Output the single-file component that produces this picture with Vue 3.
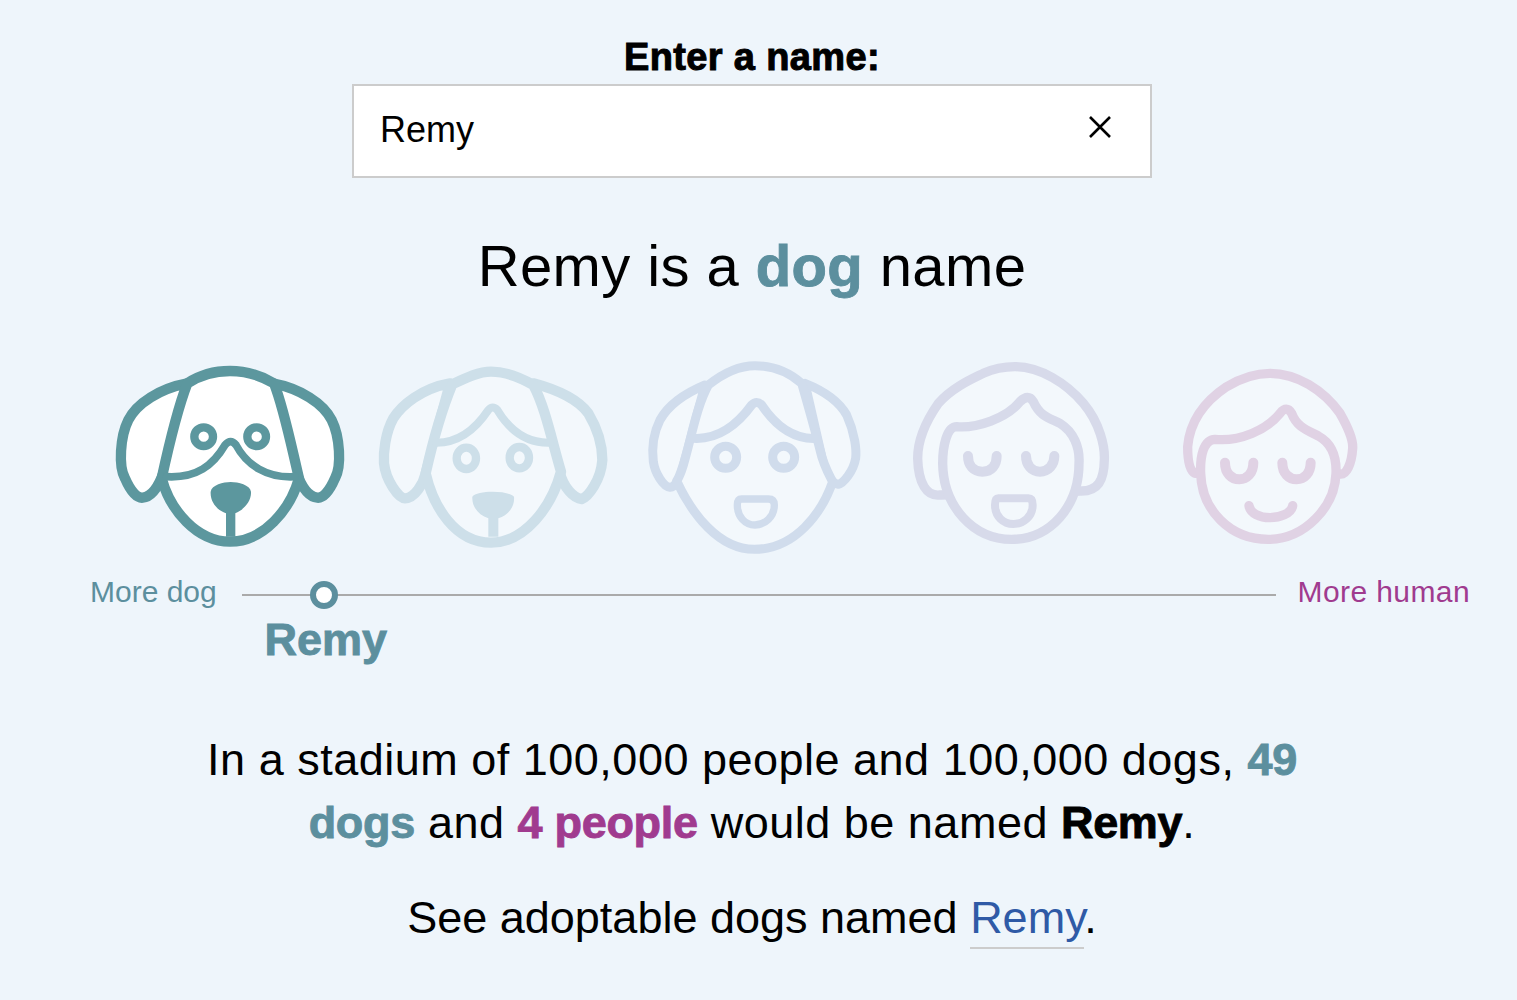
<template>
  <div class="page">
    <label class="label" for="name">Enter a name:</label>
    <div class="search">
      <input id="name" v-model="name" class="search-input" />
      <button class="clear" @click="name = ''">
        <svg width="24" height="24" viewBox="0 0 24 24">
          <path d="M2 2 L22 22 M22 2 L2 22" stroke="#000" stroke-width="2.6" fill="none" />
        </svg>
      </button>
    </div>

    <h1 class="verdict">Remy is a <b class="dog-text heavy">dog</b> name</h1>

    <div class="faces">
      <svg class="face" viewBox="0 0 795 630">
        <g fill="#fff" stroke="#5c979e" stroke-width="31" stroke-linejoin="round" stroke-linecap="round">
          <path d="M262 100 C180 115 110 160 85 210 C60 260 55 350 75 385 C90 420 110 445 128 443 C155 440 175 410 190 370 Z" />
          <path d="M518 100 C600 115 670 160 695 210 C720 260 725 350 705 385 C690 420 670 445 652 443 C625 440 605 410 590 370 Z" />
          <path d="M262 100 C300 75 345 63 390 63 C435 63 480 75 522 100 C550 170 570 270 597 385 C570 480 490 575 390 575 C290 575 210 480 185 385 C210 270 235 170 262 100 Z" />
          <path d="M200 380 C290 385 340 345 375 285 Q392 265 408 285 C440 345 500 385 585 380" fill="none" stroke-width="23" />
          <circle cx="311" cy="260" r="28" stroke-width="25" />
          <circle cx="470" cy="260" r="28" stroke-width="25" />
        </g>
        <path d="M332 425 C335 405 370 396 392 396 C415 396 450 405 453 425 C455 455 430 480 406 490 L406 560 L378 560 L378 490 C350 480 330 455 332 425 Z" fill="#5c979e" />
      </svg>

      <svg class="face" viewBox="0 0 795 630">
        <g fill="#f3f8fc" stroke="#cddfe9" stroke-width="31" stroke-linejoin="round" stroke-linecap="round">
          <path d="M255 100 C170 115 110 165 85 205 C60 250 55 310 57 340 C62 390 100 445 120 445 C150 445 175 400 182 370 Z" />
          <path d="M505 100 C580 120 640 150 670 190 C700 240 712 290 712 330 C708 390 670 440 650 447 C625 445 595 410 585 370 Z" />
          <path d="M262 103 C300 85 340 65 378 65 C420 65 470 85 505 105 C540 170 560 270 588 365 C560 470 480 578 378 578 C270 578 205 470 182 370 C200 290 230 180 262 103 Z" />
          <path d="M215 278 C290 278 340 225 370 180 Q383 165 397 180 C430 235 480 280 555 278" fill="none" stroke-width="24" />
          <ellipse cx="304" cy="325" rx="29" ry="32" stroke-width="25" />
          <ellipse cx="463" cy="323" rx="29" ry="32" stroke-width="25" />
        </g>
        <path d="M322 440 C335 420 430 420 447 440 C450 470 430 495 400 505 L400 560 L370 560 L370 505 C340 495 320 470 322 440 Z" fill="#cddfe9" />
      </svg>

      <svg class="face" viewBox="0 0 795 630">
        <g transform="translate(-795 0)" fill="#f3f8fc" stroke="#d0dcec" stroke-width="27" stroke-linejoin="round" stroke-linecap="round">
          <path d="M1020 105 C960 130 910 165 885 210 C860 260 862 310 865 335 C870 370 895 410 915 412 C935 410 950 370 958 335 Z" />
          <path d="M1320 100 C1370 120 1420 150 1445 195 C1470 250 1475 300 1472 325 C1465 365 1435 400 1420 403 C1400 400 1385 370 1375 340 Z" />
          <path d="M1030 105 C1080 65 1130 47 1170 47 C1220 47 1270 65 1310 100 C1330 170 1350 240 1365 300 C1375 345 1390 370 1403 395 C1370 490 1290 598 1168 598 C1060 598 980 490 935 393 C950 370 960 330 975 270 C990 210 1005 150 1030 105 Z" />
          <path d="M985 265 C1060 270 1120 220 1160 165 Q1175 150 1190 165 C1230 225 1280 268 1352 265" fill="none" />
          <circle cx="1082" cy="322" r="33" />
          <circle cx="1256" cy="322" r="33" />
          <path d="M1130 447 L1210 447 Q1228 447 1228 465 C1228 500 1200 525 1170 525 C1140 525 1117 500 1117 465 Q1117 447 1130 447 Z" stroke-width="22" />
        </g>
      </svg>

      <svg class="face" viewBox="0 0 795 630">
        <g transform="translate(15 0)" fill="#f3f8fc" stroke="#d7daea" stroke-width="28" stroke-linejoin="round" stroke-linecap="round">
          <path d="M120 435 C80 440 55 400 53 325 C53 270 80 210 115 160 C160 110 220 85 250 70 C290 52 330 50 345 50 C420 50 500 100 550 160 C600 220 615 290 613 330 C612 390 595 425 540 423 Z" />
          <path d="M170 230 C230 235 320 205 360 155 Q385 130 400 155 C420 200 450 205 480 220 C520 245 540 290 537 340 C537 470 450 568 335 568 C220 568 130 470 128 340 C128 290 140 230 170 230 Z" />
          <path d="M204 318 C204 345 220 365 247 365 C275 365 290 345 290 318" fill="none" stroke-width="30" />
          <path d="M378 318 C378 345 395 365 420 365 C445 365 463 345 463 318" fill="none" stroke-width="30" />
          <path d="M295 445 L385 445 Q398 445 398 465 C398 500 370 522 340 522 C310 522 285 500 285 465 Q285 445 295 445 Z" stroke-width="24" />
        </g>
      </svg>

      <svg class="face" viewBox="0 0 795 630">
        <g transform="translate(-780 0)" fill="#f3f8fc" stroke="#e0d2e4" stroke-width="28" stroke-linejoin="round" stroke-linecap="round">
          <path d="M885 370 C865 360 863 320 863 290 C870 210 920 150 980 110 C1030 80 1070 70 1110 70 C1190 70 1270 120 1320 190 C1340 225 1360 270 1358 295 C1355 340 1340 375 1320 372 Z" />
          <path d="M945 268 C1020 275 1100 240 1140 190 Q1160 165 1175 190 C1190 230 1220 240 1255 258 C1295 280 1310 320 1308 370 C1305 470 1215 568 1105 568 C990 568 905 480 902 370 C900 320 910 270 945 268 Z" />
          <path d="M975 338 C975 370 995 388 1018 388 C1040 388 1060 370 1060 338" fill="none" stroke-width="30" />
          <path d="M1147 338 C1147 370 1167 388 1190 388 C1212 388 1232 370 1232 338" fill="none" stroke-width="30" />
          <path d="M1047 467 C1050 490 1080 503 1110 503 C1140 503 1175 490 1178 467" fill="none" />
        </g>
      </svg>
    </div>

    <div class="scale">
      <span class="end dog-text">More dog</span>
      <div class="track">
        <div class="marker" :style="{ left: position + 'px' }">
          <span class="dot"></span>
          <span class="marker-name heavy">Remy</span>
        </div>
      </div>
      <span class="end human-text">More human</span>
    </div>

    <div class="stat">
      <p>In a stadium of 100,000 people and 100,000 dogs, <b class="dog-text heavy">49</b></p>
      <p><b class="dog-text heavy">dogs</b> and <b class="human-text heavy">4 people</b> would be named <b class="heavy">Remy</b>.</p>
    </div>
    <p class="adopt">See adoptable dogs named <a class="link" href="#">Remy</a>.</p>
  </div>
</template>

<script setup>
import { ref } from 'vue';

const name = ref('Remy');
const position = 82;
</script>

<style>
body {
  background: #eef5fb;
}
</style>

<style scoped>
.page {
  width: 1504px;
  height: 1000px;
  overflow: hidden;
  display: flex;
  flex-direction: column;
  align-items: center;
  font-family: "Liberation Sans", Arial, sans-serif;
  color: #000;
}

.heavy {
  -webkit-text-stroke: 0.9px currentColor;
}

.label {
  margin-top: 36px;
  height: 48px;
  font-size: 38px;
  line-height: 42px;
  font-weight: 700;
  letter-spacing: 0.35px;
  -webkit-text-stroke: 1px #000;
}

.search {
  width: 800px;
  height: 94px;
  box-sizing: border-box;
  display: flex;
  align-items: center;
  background: #fff;
  border: 2px solid #ccc;
}

.search-input {
  flex: 1;
  min-width: 0;
  height: 100%;
  box-sizing: border-box;
  padding: 0 0 2px 26px;
  border: none;
  outline: none;
  background: transparent;
  font-family: inherit;
  font-size: 36px;
  color: #000;
}

.clear {
  width: 24px;
  height: 24px;
  margin: -8px 38px 0 0;
  padding: 0;
  border: none;
  background: none;
  cursor: pointer;
}

.clear svg {
  display: block;
}

.verdict {
  margin: 55px 0 0;
  font-size: 58px;
  line-height: 66px;
  font-weight: 400;
  letter-spacing: 0.4px;
}

.faces {
  align-self: flex-start;
  display: flex;
  margin: 51px 0 0 100px;
}

.face {
  display: block;
  width: 265px;
  height: 210px;
}

.scale {
  align-self: flex-start;
  width: 1380px;
  margin: 15px 0 0 90px;
  display: flex;
  align-items: center;
  height: 34px;
}

.end {
  font-size: 30px;
  line-height: 34px;
  white-space: nowrap;
}

.end.human-text {
  letter-spacing: 0.4px;
}

.dog-text {
  color: #5c8f9e;
}

.human-text {
  color: #a03b8f;
}

.track {
  position: relative;
  flex: 1;
  height: 2px;
  margin: 6px 22px 0 25px;
  background: #aaa;
}

.marker {
  position: absolute;
  top: 1px;
  display: flex;
  flex-direction: column;
  align-items: center;
  width: 0;
}

.dot {
  flex: none;
  box-sizing: border-box;
  width: 28px;
  height: 28px;
  margin-top: -14px;
  background: #fff;
  border: 6px solid #5c8f9e;
  border-radius: 50%;
}

.marker-name {
  margin: 5px 0 0 4px;
  font-size: 45px;
  line-height: 52px;
  font-weight: 700;
  color: #5c8f9e;
}

.stat {
  margin-top: 119px;
  font-size: 45px;
  line-height: 63px;
  letter-spacing: 0.5px;
  text-align: center;
}

.stat p {
  margin: 0;
}

.stat b {
  letter-spacing: -0.3px;
}

.adopt {
  margin: 32px 0 0;
  font-size: 45px;
  line-height: 63px;
}

.link {
  color: #2f5aa6;
  text-decoration: none;
  border-bottom: 2px solid #ccc;
  padding-bottom: 4px;
}
</style>
